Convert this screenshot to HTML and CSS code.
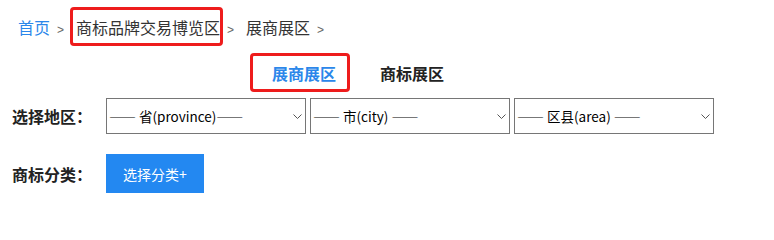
FILE: index.html
```html
<!DOCTYPE html>
<html lang="zh-CN">
<head>
<meta charset="utf-8">
<title>展商展区</title>
<link rel="stylesheet" href="styles.css">
</head>
<body>
<div class="page">
  <nav class="crumbs">
    <a class="crumb-link" href="#">首页</a>
    <span class="sep">&gt;</span>
    <span class="crumb crumb-marked">商标品牌交易博览区</span>
    <span class="sep">&gt;</span>
    <span class="crumb">展商展区</span>
    <span class="sep">&gt;</span>
  </nav>

  <div class="tabs">
    <span class="tab tab-active">展商展区</span>
    <span class="tab">商标展区</span>
  </div>

  <div class="row filters">
    <span class="label">选择地区：</span>
    <div class="selects">
      <span class="select-wrap">
        <select class="select"><option>—— 省(province)——</option></select>
        <svg class="chev" width="9" height="5" viewBox="0 0 9 5"><path d="M0.5 0.5 L4.5 4.5 L8.5 0.5" fill="none" stroke="#555" stroke-width="1"/></svg>
      </span>
      <span class="select-wrap">
        <select class="select"><option>—— 市(city) ——</option></select>
        <svg class="chev" width="9" height="5" viewBox="0 0 9 5"><path d="M0.5 0.5 L4.5 4.5 L8.5 0.5" fill="none" stroke="#555" stroke-width="1"/></svg>
      </span>
      <span class="select-wrap">
        <select class="select"><option>—— 区县(area) ——</option></select>
        <svg class="chev" width="9" height="5" viewBox="0 0 9 5"><path d="M0.5 0.5 L4.5 4.5 L8.5 0.5" fill="none" stroke="#555" stroke-width="1"/></svg>
      </span>
    </div>
  </div>

  <div class="row category">
    <span class="label">商标分类：</span>
    <button class="btn" type="button">选择分类+</button>
  </div>
</div>
</body>
</html>
```

FILE: styles.css
```css
html, body {
  margin: 0;
  padding: 0;
  background: #fff;
}

body {
  font-family: "Noto Sans CJK SC", "Noto Sans", sans-serif;
  color: #333;
}

.page {
  padding: 15px 0 0 12px;
}

.crumbs {
  display: flex;
  align-items: baseline;
  height: 24px;
  line-height: 24px;
  padding-left: 6px;
  font-size: 16px;
}

.crumb-link {
  color: #2b87ea;
  text-decoration: none;
}

.crumb {
  color: #333;
}

.crumb-marked {
  position: relative;
}

.crumb-marked::after {
  content: "";
  position: absolute;
  left: -6px;
  right: -3px;
  top: -8px;
  bottom: -7px;
  border: 3px solid #ee1c1c;
  border-radius: 4px;
}

.sep {
  font-family: "Liberation Sans", sans-serif;
  font-size: 12px;
  color: #666;
  margin: 0 12px 0 7px;
}

.tabs {
  display: flex;
  margin: 14px 0 0 238px;
  height: 39px;
}

.tab {
  display: flex;
  align-items: center;
  height: 39px;
  box-sizing: border-box;
  font-size: 16px;
  font-weight: 700;
  color: #222;
}

.tab-active {
  color: #2b87ea;
  border: 3px solid #ee1c1c;
  border-radius: 4px;
  padding: 0 11px 0 19px;
  margin-right: 30px;
}

.row {
  display: flex;
  align-items: center;
}

.filters {
  margin-top: 6px;
  height: 36px;
}

.category {
  margin-top: 20px;
  height: 39px;
}

.label {
  width: 94px;
  font-size: 16px;
  font-weight: 700;
  color: #222;
}

.selects {
  display: flex;
  gap: 4px;
}

.select-wrap {
  position: relative;
  display: block;
}

.select {
  appearance: none;
  -webkit-appearance: none;
  display: block;
  width: 200px;
  height: 36px;
  box-sizing: border-box;
  border: 1px solid #767676;
  border-radius: 0;
  background: #fff;
  padding: 0 20px 0 2px;
  font-family: "Noto Sans CJK SC", sans-serif;
  font-size: 13.5px;
  color: #000;
}

.chev {
  position: absolute;
  right: 4px;
  top: 16px;
  pointer-events: none;
}

.btn {
  width: 98px;
  height: 39px;
  border: 0;
  background: #2388f1;
  color: #fff;
  font-family: "Noto Sans CJK SC", sans-serif;
  font-size: 14px;
  padding: 0;
  cursor: pointer;
}
```
